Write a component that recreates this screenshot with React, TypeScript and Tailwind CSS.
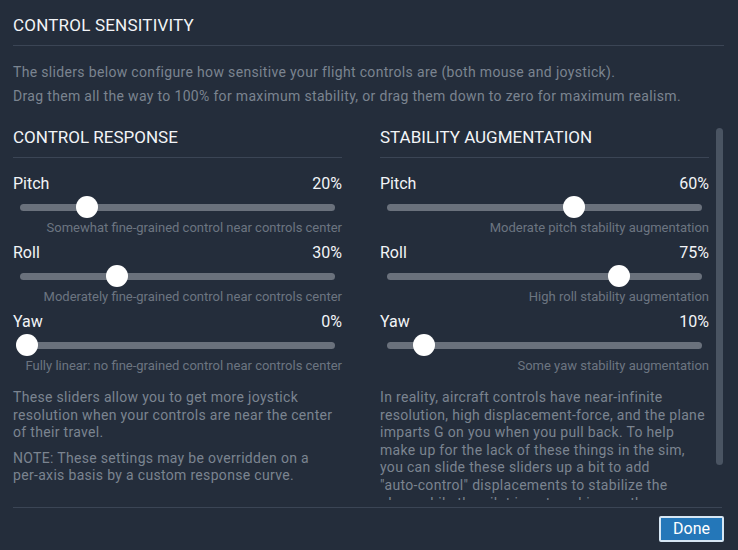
type SliderItem = {
  label: string;
  value: number;
  note: string;
};

const responseSliders: SliderItem[] = [
  { label: 'Pitch', value: 20, note: 'Somewhat fine-grained control near controls center' },
  { label: 'Roll', value: 30, note: 'Moderately fine-grained control near controls center' },
  { label: 'Yaw', value: 0, note: 'Fully linear: no fine-grained control near controls center' },
];

const stabilitySliders: SliderItem[] = [
  { label: 'Pitch', value: 60, note: 'Moderate pitch stability augmentation' },
  { label: 'Roll', value: 75, note: 'High roll stability augmentation' },
  { label: 'Yaw', value: 10, note: 'Some yaw stability augmentation' },
];

const TRACK_WIDTH = 314;

// hyphenated words never break in the original UI
function Nb({ children }: { children: React.ReactNode }) {
  return <span className="whitespace-nowrap">{children}</span>;
}

function Slider({ item, first }: { item: SliderItem; first: boolean }) {
  const center = 7 + (item.value / 100) * (TRACK_WIDTH - 14);
  return (
    <div className={first ? 'mt-[16px]' : 'mt-[7px]'}>
      <div className="flex items-center justify-between text-[16px] leading-[20px] text-[#f2f4f7]">
        <span>{item.label}</span>
        <span>{item.value}%</span>
      </div>
      <div className="mt-[2px] px-[7px]">
        <div className="relative h-[22px] flex items-center">
          <div className="h-[7px] w-full rounded-full bg-[#6a717c]" />
          <div
            className="absolute top-0 h-[22px] w-[22px] -ml-[11px] rounded-full bg-white"
            style={{ left: center }}
          />
        </div>
      </div>
      <div className="mt-[2px] text-right text-[13px] leading-[16px] text-[#6c7581]">{item.note}</div>
    </div>
  );
}

function Column({ title, sliders, children }: { title: string; sliders: SliderItem[]; children: React.ReactNode }) {
  return (
    <div className="w-[329px] shrink-0">
      <h2 className="border-b border-[#3b4555] pb-[9px] text-[17px] leading-[22px] text-[#f2f4f7]">{title}</h2>
      {sliders.map((s, i) => (
        <Slider key={s.label} item={s} first={i === 0} />
      ))}
      <div className="mt-[15px] pr-[3px] text-[14px] leading-[17.6px] tracking-[0.32px] text-[#7b8490]">{children}</div>
    </div>
  );
}

export default function App() {
  return (
    <div
      className="w-[738px] h-[550px] overflow-hidden bg-[#242d3b] flex flex-col"
      style={{ fontFamily: 'Roboto, "Liberation Sans", sans-serif' }}
    >
      <header className="px-[13px] pt-[14px] pr-[14px]">
        <h1 className="border-b border-[#3b4555] pb-[9px] text-[17px] leading-[22px] tracking-[0.2px] text-[#f2f4f7]">
          CONTROL SENSITIVITY
        </h1>
        <div className="mt-[14px] text-[14px] leading-[24px] tracking-[0.33px] text-[#7b8490]">
          <p>The sliders below configure how sensitive your flight controls are (both mouse and joystick).</p>
          <p>Drag them all the way to 100% for maximum stability, or drag them down to zero for maximum realism.</p>
        </div>
      </header>

      <div className="mt-[18px] flex h-[374px]">
        <div className="flex-1 overflow-hidden pl-[13px]">
          <div className="flex gap-[38px]">
            <Column title="CONTROL RESPONSE" sliders={responseSliders}>
              <p>
                These sliders allow you to get more joystick resolution when your controls are near the center of their
                travel.
              </p>
              <p className="mt-[8px]">
                NOTE: These settings may be overridden on a <Nb>per-axis</Nb> basis by a custom response curve.
              </p>
            </Column>
            <Column title="STABILITY AUGMENTATION" sliders={stabilitySliders}>
              <p>
                In reality, aircraft controls have <Nb>near-infinite</Nb> resolution, high <Nb>displacement-force,</Nb>{' '}
                and the plane imparts G on you when you pull back. To help make up for the lack of these things in the
                sim, you can slide these sliders up a bit to add <Nb>"auto-control"</Nb> displacements to stabilize the
                plane while the pilot is not pushing on the controls, giving a feel closer to the real thing.
              </p>
            </Column>
          </div>
        </div>
        <div className="ml-[7px] mr-[15px] w-[7px]">
          <div className="mt-[2px] h-[337px] rounded-full bg-[#4a5462]" />
        </div>
      </div>

      <footer className="mt-[7px] ml-[13px] mr-[16px] border-t border-[#3b4555] flex justify-end pt-[8px]">
        <button className="-mr-[2px] flex h-[26px] w-[65px] items-center justify-center rounded-[2px] border-2 border-[#d6e6f4] bg-[#2477b9] text-[16px] leading-none text-white">
          Done
        </button>
      </footer>
    </div>
  );
}
